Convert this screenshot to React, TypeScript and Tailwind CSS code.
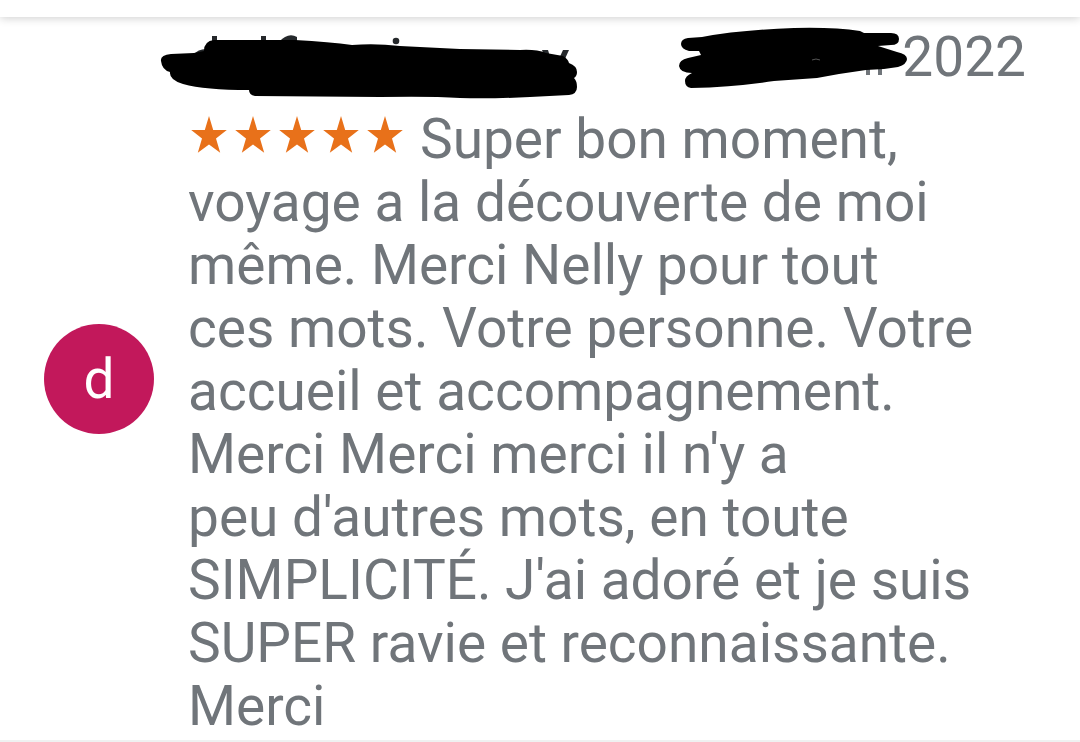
import React from 'react';

const REVIEW_LINES = [
  'Super bon moment,',
  'voyage a la découverte de moi',
  'même. Merci Nelly pour tout',
  'ces mots. Votre personne. Votre',
  'accueil et accompagnement.',
  "Merci Merci merci il n'y a",
  "peu d'autres mots, en toute",
  "SIMPLICITÉ. J'ai adoré et je suis",
  'SUPER ravie et reconnaissante.',
  'Merci',
];

const Stars: React.FC = () => (
  <svg
    role="img"
    aria-label="5 étoiles sur 5"
    viewBox="0 0 220 38"
    className="inline-block w-[220px] h-[38px] mr-3 align-[4px]"
  >
    {[0, 1, 2, 3, 4].map((i) => (
      <path
        key={i}
        transform={`translate(${i * 44} 0)`}
        d="M21 0 L25.2 14 H38.8 L28 22.4 L32.2 36.8 L21 28.4 L9.8 36.8 L14 22.4 L3.2 14 H16.8 Z"
        fill="#e8711a"
      />
    ))}
  </svg>
);

// Hidden reviewer name, only the tops of a few letters stick out
const HiddenName: React.FC = () => (
  <svg role="img" aria-label="Nom masqué" viewBox="0 0 420 66" className="w-[420px] h-[66px] shrink-0">
    <g fill="#25282b">
      <rect x="52" y="1" width="5" height="6" />
      <rect x="101" y="1" width="5" height="6" />
      <path d="M119 7 Q128 -3 137 2 V7 Z" />
      <circle cx="236" cy="6" r="3.3" />
      <path d="M382 15 H388 L391 25 H386 Z" />
      <path d="M403 15 H409 L404 26 H398 Z" />
      <path d="M33 20 Q38 14 46 14 V20 Z" />
    </g>
    <path
      d="M11 19 L34 18 L44 16 Q44 6 54 5 H135 Q170 7 192 10 Q215 8 240 11 L300 14 L360 15 Q376 14 386 18 L403 21 Q408 24 409 28 Q417 31 417 37 Q417 41 414 43 Q417 46 417 52 Q417 59 409 60 L370 62 Q330 64 300 63 Q270 61 220 62 L95 61 Q89 60 89 55 Q45 55 23 49 Q9 45 10 37 Q2 35 1 26 Q0 20 11 19 Z"
      fill="#000"
    />
  </svg>
);

const HiddenDate: React.FC = () => (
  <svg role="img" aria-label="Jour et mois masqués" viewBox="0 0 228 62" className="w-[228px] h-[62px] shrink-0">
    <g fill="#70757a">
      <rect x="187" y="40" width="4" height="8" />
      <rect x="199" y="40" width="4" height="8" />
    </g>
    <path
      d="M9 11 L23 10 Q60 3 115 1 Q155 0 181 4 L185 6 H212 Q220 6 220 12 Q220 18 212 18 L199 19 L218 25 Q228 27 228 32 Q228 37 219 40 L205 42 L187 43 L160 47 L138 51 L95 54 Q55 60 12 61 Q6 60 6 54 Q6 49 13 46 Q1 46 0 39 Q0 33 9 31 L22 28 L20 24 H10 Q2 22 2 17 Q2 12 9 11 Z"
      fill="#000"
    />
    <path d="M133 33 Q137 31 141 33" stroke="#555" fill="none" />
  </svg>
);

const App: React.FC = () => {
  return (
    <main className="w-full bg-white font-['Roboto',sans-serif] text-[#70757a]">
      <div className="h-[17px] bg-white shadow-[0_1px_10px_rgba(0,0,0,0.2)]" />

      <article className="flex items-center gap-[34px] pl-11 pr-[54px] pt-2.5 pb-[2px] border-b-2 border-[#eff1f1]">
        <div className="flex items-center justify-center w-[110px] h-[110px] mb-2 shrink-0 rounded-full bg-[#c2185b] text-white text-[55px] leading-[60px]">
          d
        </div>

        <div className="flex-1 min-w-0">
          <header className="flex items-start justify-between h-[81px] -ml-7">
            <div className="pt-2">
              <HiddenName />
            </div>
            <div className="flex items-start">
              <HiddenDate />
              <time dateTime="2022" className="-ml-[5px] text-[55px] leading-[60px]">
                2022
              </time>
            </div>
          </header>

          <p className="text-[55px] leading-[63px] whitespace-nowrap">
            <Stars />
            {REVIEW_LINES.map((line, i) => (
              <React.Fragment key={i}>
                {line}
                {i < REVIEW_LINES.length - 1 && <br />}
              </React.Fragment>
            ))}
          </p>
        </div>
      </article>
    </main>
  );
};

export default App;
